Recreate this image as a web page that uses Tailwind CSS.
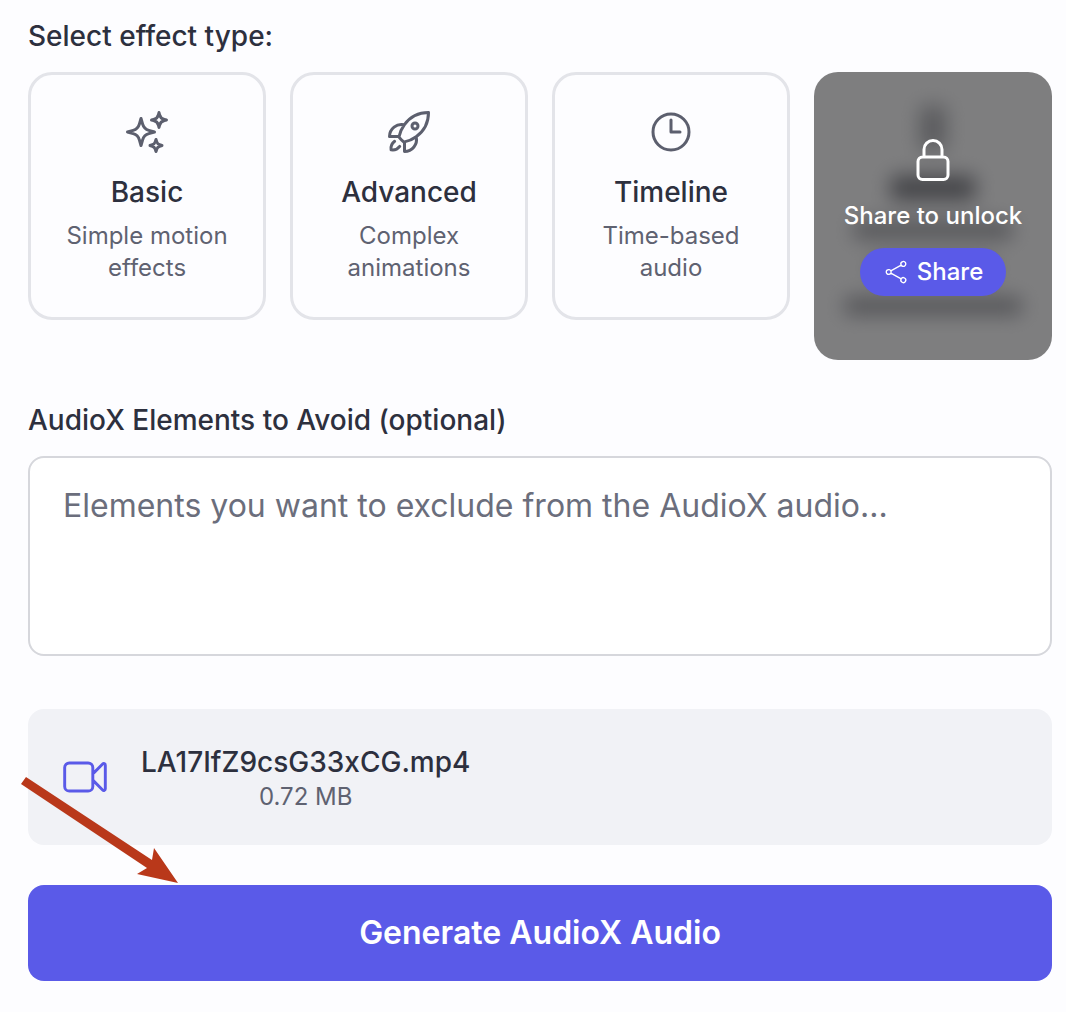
<!DOCTYPE html>
<html lang="en">
<head>
  <meta charset="UTF-8">
  <meta name="viewport" content="width=device-width, initial-scale=1.0">
  <title>AudioX</title>
  <script src="https://cdn.jsdelivr.net/npm/@tailwindcss/browser@4"></script>
</head>
<body class="bg-[#fdfdff] font-[Inter,sans-serif] text-[#2d303e] h-[1012px] overflow-hidden relative">
  <div class="pl-[28px] pr-[14px] pt-[20px]">

    <!-- effect type -->
    <h3 class="text-[28px] leading-[32px] font-medium mb-[20px]">Select effect type:</h3>
    <div class="grid grid-cols-4 gap-[24px] items-start">
      <button class="h-[248px] border-[3px] border-[#e3e4e9] rounded-[24px] flex flex-col items-center pt-[33px]">
        <svg class="w-[48px] h-[48px] text-[#5c5f6e]" fill="none" viewBox="0 0 24 24" stroke-width="1.5" stroke="currentColor"><path stroke-linecap="round" stroke-linejoin="round" d="M9.813 15.904 9 18.75l-.813-2.846a4.5 4.5 0 0 0-3.09-3.09L2.25 12l2.846-.813a4.5 4.5 0 0 0 3.09-3.09L9 5.25l.813 2.846a4.5 4.5 0 0 0 3.09 3.09L15.75 12l-2.846.813a4.5 4.5 0 0 0-3.09 3.09ZM18.259 8.715 18 9.75l-.259-1.035a3.375 3.375 0 0 0-2.455-2.456L14.25 6l1.036-.259a3.375 3.375 0 0 0 2.455-2.456L18 2.25l.259 1.035a3.375 3.375 0 0 0 2.456 2.456L21.75 6l-1.035.259a3.375 3.375 0 0 0-2.456 2.456ZM16.894 20.567 16.5 21.75l-.394-1.183a2.25 2.25 0 0 0-1.423-1.423L13.5 18.75l1.183-.394a2.25 2.25 0 0 0 1.423-1.423l.394-1.183.394 1.183a2.25 2.25 0 0 0 1.423 1.423l1.183.394-1.183.394a2.25 2.25 0 0 0-1.423 1.423Z"/></svg>
        <span class="text-[28px] leading-[36px] font-medium mt-[18px]">Basic</span>
        <span class="text-[24px] leading-[32px] text-[#5f6271] mt-[10px]">Simple motion<br>effects</span>
      </button>
      <button class="h-[248px] border-[3px] border-[#e3e4e9] rounded-[24px] flex flex-col items-center pt-[33px]">
        <svg class="w-[48px] h-[48px] text-[#5c5f6e]" fill="none" viewBox="0 0 24 24" stroke-width="1.5" stroke="currentColor"><path stroke-linecap="round" stroke-linejoin="round" d="M15.59 14.37a6 6 0 0 1-5.84 7.38v-4.8m5.84-2.58a14.98 14.98 0 0 0 6.16-12.12A14.98 14.98 0 0 0 9.631 8.41m5.96 5.96a14.926 14.926 0 0 1-5.841 2.58m-.119-8.54a6 6 0 0 0-7.381 5.84h4.8m2.581-5.84a14.927 14.927 0 0 0-2.58 5.84m2.699 2.7c-.103.021-.207.041-.311.06a15.09 15.09 0 0 1-2.448-2.448 14.9 14.9 0 0 1 .06-.312m-2.24 2.39a4.493 4.493 0 0 0-1.757 4.306 4.493 4.493 0 0 0 4.306-1.758M16.5 9a1.5 1.5 0 1 1-3 0 1.5 1.5 0 0 1 3 0Z"/></svg>
        <span class="text-[28px] leading-[36px] font-medium mt-[18px]">Advanced</span>
        <span class="text-[24px] leading-[32px] text-[#5f6271] mt-[10px]">Complex<br>animations</span>
      </button>
      <button class="h-[248px] border-[3px] border-[#e3e4e9] rounded-[24px] flex flex-col items-center pt-[33px]">
        <svg class="w-[48px] h-[48px] text-[#5c5f6e]" fill="none" viewBox="0 0 24 24" stroke-width="1.5" stroke="currentColor"><path stroke-linecap="round" stroke-linejoin="round" d="M12 6v6h4.5m4.5 0a9 9 0 1 1-18 0 9 9 0 0 1 18 0Z"/></svg>
        <span class="text-[28px] leading-[36px] font-medium mt-[18px]">Timeline</span>
        <span class="text-[24px] leading-[32px] text-[#5f6271] mt-[10px]">Time-based<br>audio</span>
      </button>

      <!-- locked card: the content under the overlay is blurred beyond reading -->
      <div class="relative h-[288px] rounded-[24px] overflow-hidden bg-[#fdfdff]">
        <div class="h-full flex flex-col items-center pt-[34px] blur-[10px]">
          <div class="w-[26px] h-[44px] bg-[#b4b5bb]"></div>
          <div class="w-[84px] h-[24px] bg-[#85868e] mt-[26px]"></div>
          <div class="w-[158px] h-[16px] bg-[#a0a1a8] mt-[22px]"></div>
          <div class="w-[120px] h-[16px] bg-[#a0a1a8] mt-[22px]"></div>
          <div class="w-[176px] h-[16px] bg-[#a0a1a8] mt-[22px]"></div>
        </div>
        <div class="absolute inset-0 bg-black/50 flex flex-col items-center pt-[64px]">
          <svg class="w-[48px] h-[48px] text-white" fill="none" viewBox="0 0 24 24" stroke-width="1.5" stroke="currentColor"><path stroke-linecap="round" stroke-linejoin="round" d="M16.5 10.5V6.75a4.5 4.5 0 1 0-9 0v3.75m-.75 11.25h10.5a2.25 2.25 0 0 0 2.25-2.25v-6.75a2.25 2.25 0 0 0-2.25-2.25H6.75a2.25 2.25 0 0 0-2.25 2.25v6.75a2.25 2.25 0 0 0 2.25 2.25Z"/></svg>
          <span class="text-[24px] leading-[32px] font-medium text-white mt-[16px]">Share to unlock</span>
          <button class="mt-[16px] h-[48px] w-[146px] rounded-full bg-[#5a5ae8] text-white flex items-center justify-center gap-[8px] text-[24px] font-medium">
            <svg class="w-[26px] h-[26px]" fill="none" viewBox="0 0 24 24" stroke-width="1.25" stroke="currentColor"><path stroke-linecap="round" stroke-linejoin="round" d="M7.217 10.907a2.25 2.25 0 1 0 0 2.186m0-2.186c.18.324.283.696.283 1.093s-.103.77-.283 1.093m0-2.186 9.566-5.314m-9.566 7.5 9.566 5.314m0 0a2.25 2.25 0 1 0 3.935 2.186 2.25 2.25 0 0 0-3.935-2.186Zm0-12.814a2.25 2.25 0 1 0 3.933-2.185 2.25 2.25 0 0 0-3.933 2.185Z"/></svg>
            Share
          </button>
        </div>
      </div>
    </div>

    <!-- negative prompt -->
    <label class="block text-[28px] leading-[32px] font-medium mt-[44px] mb-[20px]">AudioX Elements to Avoid (optional)</label>
    <textarea class="block w-full h-[200px] bg-white border-2 border-[#d6d7dc] rounded-[16px] px-[33px] py-[26px] text-[32px] leading-[44px] resize-none placeholder:text-[#6b6e7c]" placeholder="Elements you want to exclude from the AudioX audio..."></textarea>

    <!-- uploaded file -->
    <div class="mt-[53px] h-[136px] bg-[#f1f2f6] rounded-[16px] flex items-center pl-[32px]">
      <svg class="w-[50px] h-[50px] text-[#5a5ae8]" fill="none" viewBox="0 0 24 24" stroke-width="1.4" stroke="currentColor"><path stroke-linecap="round" stroke-linejoin="round" d="m15.75 10.5 4.72-4.72a.75.75 0 0 1 1.28.53v11.38a.75.75 0 0 1-1.28.53l-4.72-4.72M4.5 18.75h9a2.25 2.25 0 0 0 2.25-2.25v-9a2.25 2.25 0 0 0-2.25-2.25h-9A2.25 2.25 0 0 0 2.25 7.5v9a2.25 2.25 0 0 0 2.25 2.25Z"/></svg>
      <div class="ml-[31px] pt-[2px] text-center">
        <p class="text-[28px] leading-[36px] font-medium">LA17IfZ9csG33xCG.mp4</p>
        <p class="text-[24px] leading-[32px] text-[#5f6271] mt-[1px]">0.72 MB</p>
      </div>
    </div>

    <button class="mt-[40px] w-full h-[96px] bg-[#5a5ae8] rounded-[16px] text-white text-[32px] font-semibold">Generate AudioX Audio</button>
  </div>

  <!-- annotation arrow -->
  <svg class="absolute left-0 top-0 pointer-events-none" width="200" height="1012" viewBox="0 0 200 1012" fill="#b9381a">
    <path d="M21 784 26 777 152 860 154 848 178 883 137 874 147 868Z"/>
  </svg>
</body>
</html>
